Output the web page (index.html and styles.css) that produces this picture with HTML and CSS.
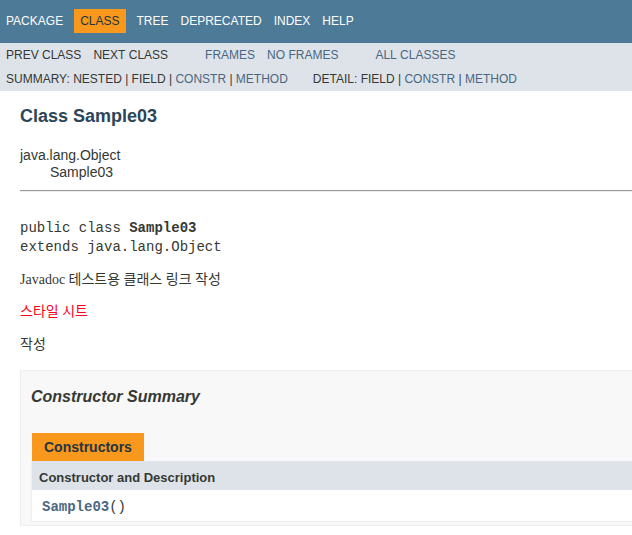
FILE: index.html
```html
<!DOCTYPE html>
<html lang="ko">
<head>
<meta charset="utf-8">
<title>Sample03</title>
<link rel="stylesheet" href="styles.css">
</head>
<body>
<div class="page">
  <nav class="top-nav">
    <ul class="nav-list">
      <li>Package</li>
      <li class="nav-current">Class</li>
      <li>Tree</li>
      <li>Deprecated</li>
      <li>Index</li>
      <li>Help</li>
    </ul>
  </nav>
  <div class="sub-nav">
    <div class="sub-row">
      <ul class="nav-list">
        <li>Prev&nbsp;Class</li>
        <li>Next&nbsp;Class</li>
      </ul>
      <ul class="nav-list">
        <li><a href="#">Frames</a></li>
        <li><a href="#">No&nbsp;Frames</a></li>
      </ul>
      <ul class="nav-list">
        <li><a href="#">All&nbsp;Classes</a></li>
      </ul>
    </div>
    <div class="sub-row sub-row-second">
      <ul class="sub-list">
        <li>Summary:&nbsp;</li>
        <li>Nested&nbsp;|&nbsp;</li>
        <li>Field&nbsp;|&nbsp;</li>
        <li><a href="#">Constr</a>&nbsp;|&nbsp;</li>
        <li><a href="#">Method</a></li>
      </ul>
      <ul class="sub-list">
        <li>Detail:&nbsp;</li>
        <li>Field&nbsp;|&nbsp;</li>
        <li><a href="#">Constr</a>&nbsp;|&nbsp;</li>
        <li><a href="#">Method</a></li>
      </ul>
    </div>
  </div>

  <div class="header">
    <h2 class="title">Class Sample03</h2>
  </div>

  <div class="content">
    <div class="inheritance">
      <div>java.lang.Object</div>
      <div class="inheritance-child">Sample03</div>
    </div>
    <div class="description">
      <hr class="rule">
      <pre class="signature">public class <span class="type-name">Sample03</span>
extends java.lang.Object</pre>
      <div class="block">
        <p>Javadoc 테스트용 클래스 링크 작성</p>
        <p class="red">스타일 시트</p>
        <p>작성</p>
      </div>
    </div>

    <section class="summary">
      <h3 class="summary-title">Constructor Summary</h3>
      <table class="member-summary">
        <caption><span class="tab">Constructors</span></caption>
        <tr><th>Constructor and Description</th></tr>
        <tr><td><code><a href="#" class="member-link">Sample03</a>()</code></td></tr>
      </table>
    </section>
  </div>
</div>
</body>
</html>
```

FILE: styles.css
```css
html {
  overflow: hidden;
}
body {
  margin: 0;
  background: #ffffff;
  color: #353833;
  font-family: "Liberation Sans", Arial, Helvetica, sans-serif;
  font-size: 14px;
}
.page {
  min-width: 760px;
}
a {
  color: #4a6782;
  text-decoration: none;
}
ul {
  list-style: none;
  margin: 0;
  padding: 0;
}

/* top navigation */
.top-nav {
  background: #4d7a97;
  color: #ffffff;
  height: 33.6px;
  padding-top: 9px;
  font-size: 12px;
  line-height: 14px;
}
.nav-list {
  display: flex;
  margin-right: 25px;
}
.nav-list li {
  padding: 5px 6px;
  text-transform: uppercase;
}
.nav-current {
  background: #f8981d;
  color: #253441;
  margin: 0 5px;
}

/* sub navigation */
.sub-nav {
  background: #dee3e9;
  font-size: 12px;
  line-height: 14px;
}
.sub-row {
  display: flex;
}
.sub-row-second {
  padding: 5px 0 5px 6px;
  text-transform: uppercase;
}
.sub-list {
  display: flex;
  margin-right: 25px;
}

/* header */
.header {
  margin: 0 20px;
  padding-top: 5px;
}
.title {
  color: #2c4557;
  font-size: 18px;
  line-height: 21px;
  margin: 10px 0;
}

/* content */
.content {
  padding: 10px 20px;
}
.inheritance {
  line-height: 16px;
}
.inheritance-child {
  margin-left: 30px;
  padding-top: 1px;
}
.rule {
  margin: 10px 0 0;
  height: 0;
  border: 0;
  border-top: 1px solid #9a9a9a;
  border-bottom: 1px solid #eeeeee;
}
.signature {
  font-family: "Liberation Mono", "Courier New", monospace;
  font-size: 14px;
  line-height: 19.6px;
  margin: 27px 0 12px;
}
.type-name {
  font-weight: bold;
}
.block {
  font-family: "Liberation Serif", "Noto Sans CJK KR", serif;
  font-size: 14px;
  line-height: 19.6px;
}
.block p {
  margin: 13px 0;
}
.block p:first-child {
  margin-top: 12px;
}
.red {
  color: #ff0022;
}

/* constructor summary */
.summary {
  margin-top: 15px;
  padding: 0 20px 3px 10px;
  border: 1px solid #ededed;
  background: #f8f8f8;
  line-height: 1.4;
}
.summary-title {
  font-size: 16px;
  font-style: italic;
  font-weight: bold;
  margin: 15px 0;
}
.member-summary {
  width: 100%;
  border-spacing: 0;
  border-left: 1px solid #eeeeee;
  border-right: 1px solid #eeeeee;
  border-bottom: 1px solid #eeeeee;
}
.member-summary caption {
  text-align: left;
  padding: 10px 0 0 1px;
  white-space: pre;
}
.tab {
  display: inline-block;
  vertical-align: top;
  height: 16px;
  padding: 5px 12px 7px;
  background: #f8981d;
  color: #253441;
  font-weight: bold;
  white-space: nowrap;
}
.member-summary th {
  background: #dee3e9;
  text-align: left;
  font-size: 13px;
  font-weight: bold;
  padding: 8px 3px 3px 7px;
}
.member-summary td {
  background: #ffffff;
  text-align: left;
  font-size: 13px;
  padding: 8px 3px 3px 10px;
}
.member-summary code {
  font-family: "Liberation Mono", "Courier New", monospace;
  font-size: 14px;
  line-height: 19.6px;
}
.member-link {
  font-weight: bold;
}
```
